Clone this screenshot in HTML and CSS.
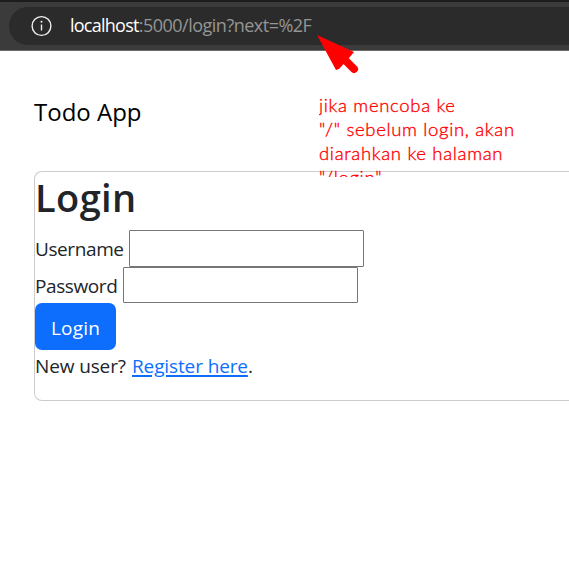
FILE: index.html
```html
<!DOCTYPE html>
<html lang="id">
<head>
<meta charset="utf-8">
<title>Todo App</title>
<link rel="stylesheet" href="styles.css">
</head>
<body>
<header class="browser-bar">
  <div class="address">
    <svg class="info" width="22" height="22" viewBox="0 0 22 22" fill="none" stroke="#f0f0f0" stroke-width="1.4"><circle cx="11.5" cy="11" r="9.4"/><path d="M11.5 9.5v6"/><circle cx="11.5" cy="6.8" r="1" fill="#f0f0f0" stroke="none"/></svg>
    <span class="url"><span class="host">localhost</span><span class="path">:5000/login?next=%2F</span></span>
  </div>
</header>
<main class="page">
  <div class="brand"><span>Todo App</span></div>
  <section class="card">
    <h1><span>Login</span></h1>
    <form>
      <div class="field user"><label for="u">Username</label><input id="u" type="text"></div>
      <div class="field pass"><label for="p">Password</label><input id="p" type="password"></div>
      <button class="btn" type="button"><span>Login</span></button>
    </form>
    <p class="signup"><span class="new">New user?</span><a href="#">Register here</a><span>.</span></p>
  </section>
</main>
<svg class="arrow" width="45" height="42" viewBox="0 0 45 42"><path d="M2 0L39 17L34 23L24 34L21 35Z" fill="red"/><path d="M28 23L39 34" stroke="red" stroke-width="8" stroke-linecap="round"/></svg>
<div class="note"><div class="n1">jika mencoba ke</div><div class="n2">"/" sebelum login, akan</div><div class="n3">diarahkan ke halaman</div><div class="n4">"/login"</div></div>
</body>
</html>
```
FILE: styles.css
```css
* { box-sizing: border-box; }
body {
  margin: 0;
  height: 582px;
  overflow: hidden;
  position: relative;
  background: #fff;
  color: #212529;
  font: 19px/30px "Open Sans", "Noto Sans", sans-serif;
}
.browser-bar {
  height: 51px;
  padding: 5px 0 0 9px;
  background: #3b3b3b;
  border-top: 2px solid #1d1d1d;
  border-bottom: 1px solid #6c6c6c;
}
.address {
  display: flex;
  align-items: center;
  height: 38px;
  padding-left: 21px;
  border-radius: 19px 0 0 19px;
  background: #2b2b2b;
}
.info { margin-right: 18px; }
.url { padding-bottom: 2px; font-size: 18px; white-space: nowrap; }
.host { color: #fff; letter-spacing: -0.75px; }
.path { color: #959595; letter-spacing: -0.5px; }
.page { padding: 46px 0 0 34px; }
.brand { height: 74px; color: #000; font-size: 24px; }
.card {
  height: 230px;
  border: 1px solid #ccc;
  border-right: 0;
  border-radius: 8px 0 0 8px;
}
h1 {
  height: 58px;
  margin: 0;
  padding-top: 1px;
  font-size: 38px;
  line-height: 48px;
  font-weight: 600;
  letter-spacing: 0.4px;
}
.field { display: flex; align-items: center; height: 37px; letter-spacing: -0.4px; }
.field label { width: 94px; white-space: nowrap; }
.pass label { width: 88px; }
.field input {
  width: 235px;
  height: 37px;
  padding: 1px 2px;
  border: 1px solid #767676;
  border-radius: 1px;
  outline: 0;
}
.pass { height: 36px; }
.pass input { height: 36px; }
.pass label { padding-top: 1px; }
.btn {
  display: block;
  width: 81px;
  height: 47px;
  padding: 3px 0 0;
  border: 0;
  border-radius: 7px;
  background: #0d6efd;
  color: #fff;
  font: inherit;
  letter-spacing: 0.2px;
}
.signup { display: flex; margin: 1px 0 0; white-space: nowrap; letter-spacing: -0.12px; }
.new { width: 97px; }
.signup a { color: #0d6efd; text-decoration-thickness: 2px; text-underline-offset: 2px; }
.arrow { position: absolute; left: 315px; top: 35px; }
.note {
  position: absolute;
  left: 319px;
  top: 93px;
  width: 220px;
  height: 84px;
  overflow: hidden;
  color: #f00;
  font: 300 18.5px/24px Lato, sans-serif;
  -webkit-text-stroke: 0.35px #f00;
  white-space: nowrap;
  letter-spacing: 0.67px;
}
```
